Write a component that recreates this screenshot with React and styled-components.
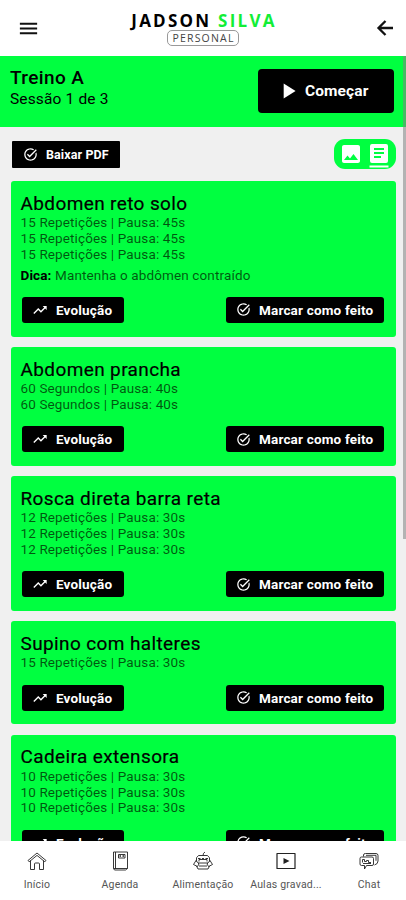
import styled, { createGlobalStyle } from "styled-components";
import {
  MdImage,
  MdMenu,
  MdPlayArrow,
  MdTaskAlt,
  MdTrendingUp,
} from "react-icons/md";

const GlobalStyle = createGlobalStyle`
  * {
    box-sizing: border-box;
  }

  :root {
    --color-brand: #00ff40;
    --color-page: #f0f0f0;
  }

  body {
    margin: 0;
    background: var(--color-page);
    color: #000;
    font-family: Roboto, sans-serif;
  }

  button {
    font-family: inherit;
    border: none;
    padding: 0;
  }

  h1, h2, p, ul {
    margin: 0;
    padding: 0;
  }
`;

const Screen = styled.div`
  display: flex;
  flex-direction: column;
  position: relative;
  height: 900px;
  overflow: hidden;
`;

const TopBar = styled.header`
  display: grid;
  flex: none;
  grid-template-columns: 60px 1fr 60px;
  align-items: center;
  height: 56px;
  padding: 0 10px 0 17px;
  background: #fff;
`;

const IconButton = styled.button`
  display: flex;
  justify-self: ${(props) => props.$side};
  background: none;
  color: #111;
`;

const Brand = styled.div`
  display: flex;
  flex-direction: column;
  align-items: center;
  margin-right: 7px;
  font-family: "Open Sans", sans-serif;
`;

const BrandName = styled.div`
  padding-top: 1px;
  font-size: 17px;
  font-weight: 700;
  line-height: 19px;
  letter-spacing: 2.25px;
  margin-right: -2px;
  white-space: nowrap;

  & span {
    color: #12ee36;
  }
`;

const BrandTag = styled.div`
  height: 16px;
  padding: 0 3px 0 4px;
  border: 1px solid #999;
  border-radius: 5px;
  color: #444;
  font-size: 10.5px;
  line-height: 14px;
  letter-spacing: 1.2px;
`;

const Hero = styled.section`
  display: flex;
  flex: none;
  justify-content: space-between;
  height: 71px;
  padding: 13px 12px 0 10px;
  background: var(--color-brand);
`;

const HeroTitle = styled.h1`
  font-size: 19px;
  font-weight: 500;
  line-height: 20px;
  letter-spacing: 0.4px;
  margin-top: -1px;
`;

const HeroText = styled.p`
  font-size: 15.5px;
  line-height: 20px;
  letter-spacing: 0.15px;
  margin-top: 1px;
`;

const StartButton = styled.button`
  display: flex;
  align-items: center;
  gap: 4px;
  width: 136px;
  height: 44px;
  padding-left: 17px;
  border-radius: 4px;
  background: #000;
  color: #fff;
  font-size: 15.5px;
  font-weight: 700;
  letter-spacing: 0.1px;
`;

const Toolbar = styled.div`
  display: flex;
  flex: none;
  justify-content: space-between;
  height: 54px;
  padding: 12px 10px 0 12px;
`;

const PdfButton = styled.button`
  display: flex;
  align-items: center;
  gap: 8px;
  width: 108px;
  height: 27px;
  margin-top: 2px;
  padding-left: 11px;
  border-radius: 1px;
  background: #000;
  color: #fff;
  font-size: 12.5px;
  font-weight: 700;
  letter-spacing: 0.1px;
  white-space: nowrap;
`;

const ViewSwitch = styled.div`
  display: flex;
  gap: 4px;
  width: 62px;
  height: 30px;
  padding: 3px 5px 0;
  border-radius: 11px;
  background: var(--color-brand);
  color: #fff;
`;

const List = styled.main`
  display: flex;
  flex: 1;
  flex-direction: column;
  gap: 10.6px;
  min-height: 0;
  overflow: hidden;
  padding: 0.4px 10px 0 11px;
`;

const Card = styled.article`
  flex: none;
  padding: 11.4px 12px 13.7px 9.5px;
  border-radius: 3px;
  background: var(--color-brand);
`;

const CardTitle = styled.h2`
  font-size: 19px;
  font-weight: 400;
  line-height: 22px;
  letter-spacing: 0.38px;
  margin-bottom: 0.6px;
  -webkit-text-stroke: 0.2px #000;
`;

const Series = styled.ul`
  list-style: none;
  color: rgba(0, 30, 0, 0.75);
  font-size: 13.5px;
  line-height: 15.6px;
  letter-spacing: 0.12px;
`;

const Tip = styled.p`
  margin-top: 5px;
  color: rgba(0, 30, 0, 0.75);
  font-size: 13.5px;
  line-height: 16px;
  letter-spacing: 0.13px;

  & strong {
    color: #000;
  }
`;

const Actions = styled.div`
  display: flex;
  justify-content: space-between;
  margin-top: 13.8px;
  padding-left: 1.5px;
`;

const ActionButton = styled.button`
  display: flex;
  align-items: center;
  gap: 8px;
  width: ${(props) => props.$width};
  height: 26px;
  padding-left: 10px;
  border-radius: 3px;
  background: #000;
  color: #fff;
  font-size: 13.5px;
  font-weight: 700;
  letter-spacing: 0.18px;
  white-space: nowrap;
`;

const BottomNav = styled.nav`
  display: grid;
  flex: none;
  grid-template-columns: repeat(5, 83px);
  justify-content: center;
  height: 59px;
  padding-top: 9px;
  background: #fff;
`;

const NavItem = styled.div`
  display: flex;
  flex-direction: column;
  align-items: center;
  gap: 6px;
  color: #555;
  font-size: 10.5px;
  line-height: 14px;
  letter-spacing: 0.2px;
  white-space: nowrap;

  & svg {
    color: #222;
  }
`;

const ScrollThumb = styled.div`
  position: absolute;
  top: 56px;
  right: 0;
  width: 3px;
  height: 483px;
  background: rgba(130, 130, 130, 0.55);
`;

function BackIcon() {
  return (
    <svg
      width="22"
      height="22"
      viewBox="0 0 22 22"
      fill="none"
      stroke="currentColor"
      strokeWidth="2.300"
    >
      <path d="M19 11H5M11.500 4 4.500 11l7 7" />
    </svg>
  );
}

function ListViewIcon() {
  return (
    <svg width="24" height="27" viewBox="0 0 24 27">
      <path
        fill="currentColor"
        fillRule="evenodd"
        d="M5 2h14q2 0 2 2v15q0 2-2 2H5q-2 0-2-2V4q0-2 2-2zM7 6v2h10V6zM7 10v2h10v-2zM7 14v2h7v-2z"
      />
      <path fill="currentColor" d="M2.500 23.500h19v2h-19z" />
    </svg>
  );
}

function NavIcon({ children }) {
  return (
    <svg
      width="22"
      height="22"
      viewBox="0 0 22 22"
      fill="none"
      stroke="currentColor"
      strokeWidth="0.9"
      strokeLinejoin="round"
    >
      {children}
    </svg>
  );
}

const navItems = [
  {
    label: "Início",
    icon: (
      <NavIcon>
        <path d="M4.500 10.500v9h4V14q0-1 1-1h3q1 0 1 1v5.500h4v-9M2 10.500 11 3l9 7.500-1.200 1.300L11 5.400l-7.800 6.400z" />
      </NavIcon>
    ),
  },
  {
    label: "Agenda",
    icon: (
      <NavIcon>
        <path d="M4.500 2h14v16.500h-14zM6.500 2v16.500M4.500 18.500l1 1.500h11l2-1.500M9.500 4.500h6.500v3.500H9.500z" />
        <path d="M10.500 6h1.500M13.500 6H15" strokeWidth="1.500" />
      </NavIcon>
    ),
  },
  {
    label: "Alimentação",
    icon: (
      <NavIcon>
        <path d="M4.500 11.500Q3.500 7 6.500 5.500h9q3 1.500 2 6M11 5.500q0-2.500 2-3.500M6 8.500h2.500M10 8.500h2M13.500 8.500H16M7 11.500v-2h8v2M6 13h10M4.500 16l1.500 3h10l1.500-3" />
        <path d="M4 10.500 1.500 14.500l4 2 1.500-2.500zM18 10.500l2.500 4-4 2-1.500-2.500zM7 16h8" />
      </NavIcon>
    ),
  },
  {
    label: "Aulas gravad...",
    icon: (
      <NavIcon>
        <path d="M2 3.500h18v15H2z" strokeWidth="1.200" />
        <path d="M8.500 8v6l6-3z" fill="currentColor" stroke="none" />
      </NavIcon>
    ),
  },
  {
    label: "Chat",
    icon: (
      <NavIcon>
        <path d="M5.500 6.500V5q0-1.500 2-1.500H18q2 0 2 2V11q0 3-3.500 4M3.500 7H14q1.500 0 1.500 1.500V14q0 1.500-1.500 1.500H8.500l-2 3.500v-3.500h-3Q2 15.500 2 14V8.500Q2 7 3.500 7z" />
        <path d="M4.500 12.500v-3h2v2h2v-1h2v2h2.500M5 13.500h8M8 5.300h10v5.500" />
      </NavIcon>
    ),
  },
];

const exercises = [
  {
    name: "Abdomen reto solo",
    series: Array(3).fill("15 Repetições | Pausa: 45s"),
    tip: "Mantenha o abdômen contraído",
  },
  {
    name: "Abdomen prancha",
    series: Array(2).fill("60 Segundos | Pausa: 40s"),
  },
  {
    name: "Rosca direta barra reta",
    series: Array(3).fill("12 Repetições | Pausa: 30s"),
  },
  {
    name: "Supino com halteres",
    series: ["15 Repetições | Pausa: 30s"],
  },
  {
    name: "Cadeira extensora",
    series: Array(3).fill("10 Repetições | Pausa: 30s"),
  },
];

function ExerciseCard({ exercise }) {
  return (
    <Card>
      <CardTitle>{exercise.name}</CardTitle>
      <Series>
        {exercise.series.map((line, i) => (
          <li key={i}>{line}</li>
        ))}
      </Series>
      {exercise.tip && (
        <Tip>
          <strong>Dica:</strong> {exercise.tip}
        </Tip>
      )}
      <Actions>
        <ActionButton $width="102px">
          <MdTrendingUp size={16} />
          Evolução
        </ActionButton>
        <ActionButton $width="158px">
          <MdTaskAlt size={15} />
          Marcar como feito
        </ActionButton>
      </Actions>
    </Card>
  );
}

function App() {
  return (
    <>
      <GlobalStyle />
      <Screen>
        <TopBar>
          <IconButton $side="start" aria-label="Menu">
            <MdMenu size={23} />
          </IconButton>
          <Brand>
            <BrandName>
              JADSON <span>SILVA</span>
            </BrandName>
            <BrandTag>PERSONAL</BrandTag>
          </Brand>
          <IconButton $side="end" aria-label="Voltar">
            <BackIcon />
          </IconButton>
        </TopBar>

        <Hero>
          <div>
            <HeroTitle>Treino A</HeroTitle>
            <HeroText>Sessão 1 de 3</HeroText>
          </div>
          <StartButton>
            <MdPlayArrow size={26} />
            Começar
          </StartButton>
        </Hero>

        <Toolbar>
          <PdfButton>
            <MdTaskAlt size={15} />
            Baixar PDF
          </PdfButton>
          <ViewSwitch>
            <MdImage size={24} />
            <ListViewIcon />
          </ViewSwitch>
        </Toolbar>

        <List>
          {exercises.map((exercise) => (
            <ExerciseCard key={exercise.name} exercise={exercise} />
          ))}
        </List>

        <BottomNav>
          {navItems.map((item) => (
            <NavItem key={item.label}>
              {item.icon}
              {item.label}
            </NavItem>
          ))}
        </BottomNav>
        <ScrollThumb />
      </Screen>
    </>
  );
}

export default App;
